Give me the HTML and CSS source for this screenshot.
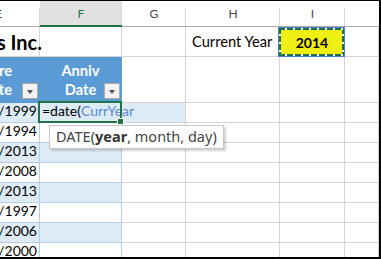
FILE: index.html
```html
<!DOCTYPE html>
<html>
<head>
<meta charset="utf-8">
<title>Anniversary Date</title>
<link rel="stylesheet" href="styles.css">
</head>
<body>
<div class="sheet">
	<div class="grid">
		<!-- column letters -->
		<div class="hd hd-e"><span>E</span></div>
		<div class="hd sel">F</div>
		<div class="hd">G</div>
		<div class="hd">H</div>
		<div class="hd">I</div>
		<div class="hd last"></div>

		<!-- row 1 -->
		<div class="c title"><span>Widgets Inc.</span></div>
		<div class="c"></div>
		<div class="c"></div>
		<div class="c label">Current Year</div>
		<div class="c year">2014</div>
		<div class="c"></div>

		<!-- table header -->
		<div class="c th th-e"><span>Hire</span><span>Date</span><i class="filter"></i></div>
		<div class="c th"><span>Anniv</span><span>Date</span><i class="filter"></i></div>
		<div class="c"></div>
		<div class="c"></div>
		<div class="c"></div>
		<div class="c"></div>

		<!-- rows -->
		<div class="c tb band date">10/16/1999</div>
		<div class="c tb band edit">=date(<span class="ref">CurrYear</span><i class="caret"></i></div>
		<div class="c band"></div>
		<div class="c"></div><div class="c"></div><div class="c"></div>

		<div class="c tb date">10/22/1994</div>
		<div class="c tb"></div>
		<div class="c"></div><div class="c"></div><div class="c"></div><div class="c"></div>

		<div class="c tb band date">11/14/2013</div>
		<div class="c tb band"></div>
		<div class="c"></div><div class="c"></div><div class="c"></div><div class="c"></div>

		<div class="c tb date">10/17/2008</div>
		<div class="c tb"></div>
		<div class="c"></div><div class="c"></div><div class="c"></div><div class="c"></div>

		<div class="c tb band date">10/17/2013</div>
		<div class="c tb band"></div>
		<div class="c"></div><div class="c"></div><div class="c"></div><div class="c"></div>

		<div class="c tb date">10/11/1997</div>
		<div class="c tb"></div>
		<div class="c"></div><div class="c"></div><div class="c"></div><div class="c"></div>

		<div class="c tb band date">10/16/2006</div>
		<div class="c tb band"></div>
		<div class="c"></div><div class="c"></div><div class="c"></div><div class="c"></div>

		<div class="c tb date">10/27/2000</div>
		<div class="c tb"></div>
		<div class="c"></div><div class="c"></div><div class="c"></div><div class="c"></div>
	</div>
	<div class="tip">DATE(<b>year</b>, month, day)</div>
</div>
</body>
</html>
```
FILE: styles.css
```css
body, div, span { margin: 0; padding: 0; }
body { background: #fff; }
.sheet { position: relative; width: 381px; height: 259px; box-sizing: border-box; border-top: 1px solid #000; border-right: 2px solid #000; border-bottom: 2px solid #000; overflow: hidden; background: #fff; font-family: Lato, "Liberation Sans", sans-serif; font-size: 14px; color: #000; }
.grid { display: grid; grid-template-columns: 40px 82px 64px 94px 65px 1fr; grid-template-rows: 26px 30px 46px repeat(8, 20px); }

/* column letters */
.hd { box-sizing: border-box; display: flex; align-items: center; justify-content: center; font-size: 12px; color: #444; border-bottom: 1px solid #ababab; background: linear-gradient(#d8d8d8, #d8d8d8) right bottom / 1px 18px no-repeat; }
.hd-e { justify-content: flex-end; }
.hd-e span { flex-shrink: 0; margin-right: 38px; }
.hd.sel { background-color: #e1e1e1; color: #217346; border-bottom: 2px solid #217346; }
.hd.last { background: none; }

/* cells */
.c { box-sizing: border-box; display: flex; align-items: flex-end; padding: 0 3px 3px; white-space: nowrap; min-width: 0; border-right: 1px solid #d4d4d4; border-bottom: 1px solid #d4d4d4; }
.title { justify-content: flex-end; align-items: center; padding: 0; font-weight: bold; font-size: 20px; }
.title span { flex-shrink: 0; margin-right: -3px; }
.label { padding-left: 6px; padding-bottom: 6px; font-size: 14.67px; }
.year { position: relative; justify-content: center; align-items: center; padding: 2px 0 0; font-weight: bold; background: #efef14; }
.year:before { content: ""; position: absolute; top: 0; left: -2px; right: -1px; bottom: -1px; border: 1px solid #4a7fd9; }
.year:after { content: ""; position: absolute; top: 1px; left: -1px; right: 0; bottom: 0; background: repeating-linear-gradient(90deg, #1e7145 0 6px, #fff 6px 8px) left top / 100% 2px no-repeat, repeating-linear-gradient(90deg, #1e7145 0 6px, #fff 6px 8px) left bottom / 100% 2px no-repeat, repeating-linear-gradient(180deg, #1e7145 0 6px, #fff 6px 8px) left top / 2px 100% no-repeat, repeating-linear-gradient(180deg, #1e7145 0 6px, #fff 6px 8px) right top / 2px 100% no-repeat; }

/* table */
.th { position: relative; flex-direction: column; align-items: center; justify-content: flex-start; padding: 4px 0 0; line-height: 19px; background: #5b9bd5; color: #fff; font-weight: bold; font-size: 14.67px; border-color: #5b9bd5; }
.th span { flex-shrink: 0; }
.th-e { align-items: flex-end; padding-right: 27px; }
.filter { position: absolute; right: 1px; bottom: 3px; width: 16px; height: 16px; box-sizing: border-box; background: #f3f3f3; border: 1px solid #a9a9a9; }
.filter:after { content: ""; position: absolute; left: 4px; top: 6px; border-left: 3.5px solid transparent; border-right: 3.5px solid transparent; border-top: 4px solid #555; }
.tb { border-color: #b7cce8; }
.band { background: #ddebf7; }
.date { justify-content: flex-end; padding-right: 2px; }
.edit { position: relative; z-index: 2; overflow: visible; padding-left: 2px; }
.edit:before { content: ""; position: absolute; top: -2px; left: -2px; right: -1px; bottom: -1px; border: 2px solid #217346; }
.edit:after { content: ""; position: absolute; right: -3px; bottom: -3px; width: 5px; height: 5px; background: #217346; border: 1px solid #fff; }
.ref { color: #5b86db; }
.caret { display: inline-block; width: 1px; height: 16px; margin: 0 0 -2px 1px; background: #000; align-self: flex-end; }

/* function tooltip */
.tip { position: absolute; left: 49px; top: 124px; width: 175px; height: 24px; box-sizing: border-box; padding-left: 6px; border: 1px solid #c6c6c6; box-shadow: 2px 2px 2px rgba(0, 0, 0, 0.18); background: #fff; font-family: "Noto Sans", sans-serif; font-size: 14.5px; line-height: 21px; color: #444; white-space: nowrap; z-index: 3; }
.tip b { color: #333; }
```
